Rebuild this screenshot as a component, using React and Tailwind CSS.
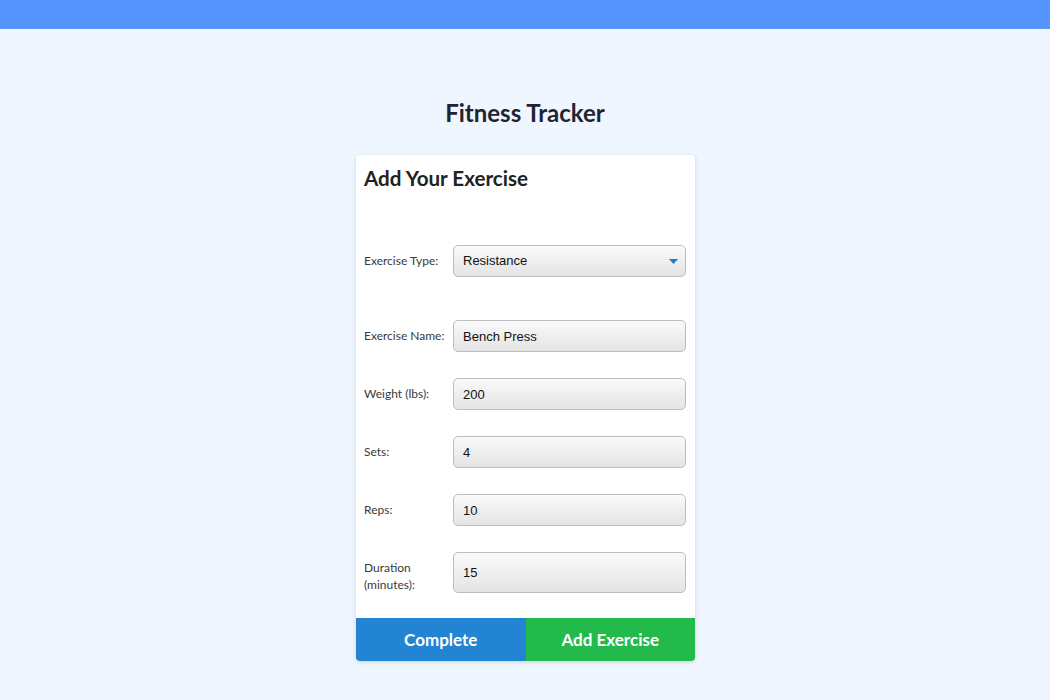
import { useState } from 'react'

function Field({ label, value, onChange, tall }) {
  return (
    <div className="flex items-center">
      <label className={`w-[89px] shrink-0 text-[12px] text-[#3a3a3a] ${tall ? 'leading-[17px] mt-[6px]' : 'leading-[16px]'}`}>{label}</label>
      <input
        value={value}
        onChange={e => onChange(e.target.value)}
        className={`w-[233px] ${tall ? 'h-[41px]' : 'h-[32px]'} rounded-[5px] border border-[#bdbdbd] bg-gradient-to-b from-[#fafafa] to-[#e4e4e4] px-[9px] text-[13px] text-[#111] outline-none font-['Liberation_Sans',Arial,sans-serif]`}
      />
    </div>
  )
}

export default function App() {
  const [type, setType] = useState('Resistance')
  const [form, setForm] = useState({ name: 'Bench Press', weight: '200', sets: '4', reps: '10', duration: '15' })
  const set = k => v => setForm({ ...form, [k]: v })

  return (
    <div className="min-h-screen bg-[#eff6ff] font-['Lato','Noto_Sans',sans-serif]">
      <div className="h-[29px] bg-[#5593fd]"></div>

      <div className="flex flex-col items-center">
        <h1 className="mt-[66px] text-[24px] leading-[36px] font-bold text-[#1f2530]">Fitness Tracker</h1>

        <div className="mt-[24px] ml-[1px] w-[339px] bg-white rounded-[4px] shadow-[0_1px_4px_rgba(0,0,0,0.15)] overflow-hidden">
          <div className="pl-[8px] pr-[9px] pt-[8px]">
            <h2 className="text-[20.6px] leading-[30px] font-bold text-[#222]">Add Your Exercise</h2>

            {/* select */}
            <div className="flex items-center mt-[52px]">
              <label className="w-[89px] shrink-0 text-[12px] text-[#3a3a3a]">Exercise Type:</label>
              <div className="relative w-[233px] h-[32px]">
                <select
                  value={type}
                  onChange={e => setType(e.target.value)}
                  className="appearance-none w-full h-full rounded-[5px] border border-[#bdbdbd] bg-gradient-to-b from-[#fafafa] to-[#e4e4e4] px-[9px] text-[13px] text-[#111] outline-none font-['Liberation_Sans',Arial,sans-serif]"
                >
                  <option>Resistance</option>
                  <option>Cardio</option>
                </select>
                <svg className="absolute right-[8px] top-[14px] pointer-events-none" width="9" height="5" viewBox="0 0 9 5">
                  <path d="M0 0 L9 0 L4.5 5 Z" fill="#1a7fc4" />
                </svg>
              </div>
            </div>

            <div className="flex flex-col mt-[43px] gap-[26px]">
              <Field label="Exercise Name:" value={form.name} onChange={set('name')} />
              <Field label="Weight (lbs):" value={form.weight} onChange={set('weight')} />
              <Field label="Sets:" value={form.sets} onChange={set('sets')} />
              <Field label="Reps:" value={form.reps} onChange={set('reps')} />
              <Field label="Duration (minutes):" value={form.duration} onChange={set('duration')} tall />
            </div>
          </div>

          <div className="flex mt-[25px]">
            <button className="flex-1 h-[43px] bg-[#2384d3] text-white text-[17px] font-bold">Complete</button>
            <button className="flex-1 h-[43px] bg-[#22bb4b] text-white text-[17px] font-bold">Add Exercise</button>
          </div>
        </div>
      </div>
    </div>
  )
}
